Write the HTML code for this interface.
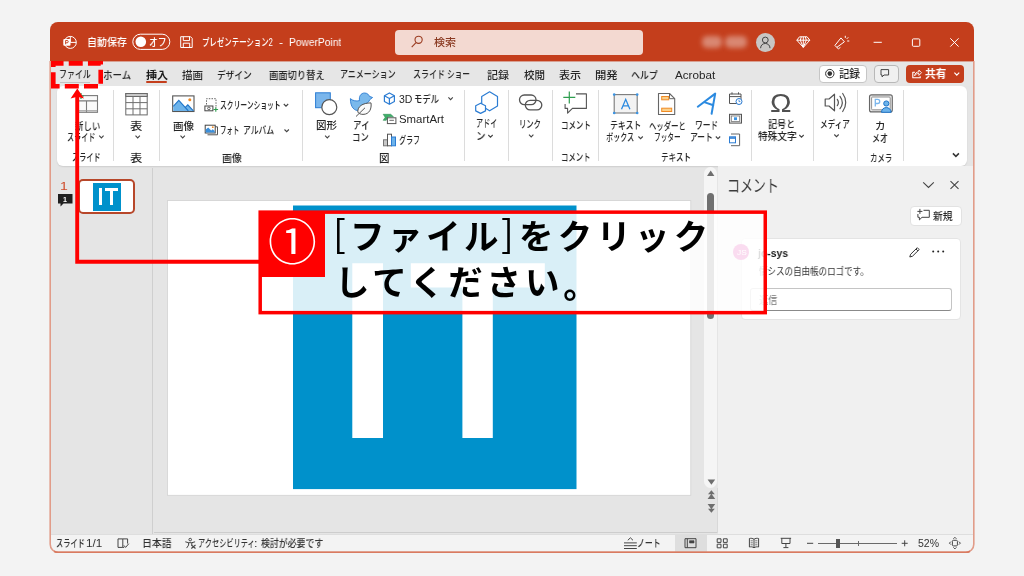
<!DOCTYPE html>
<html lang="ja">
<head>
<meta charset="utf-8">
<title>PowerPoint</title>
<style>
*{box-sizing:border-box;margin:0;padding:0}
html,body{width:1024px;height:576px;overflow:hidden;background:#f3f3f3}
body{position:relative;font-family:"Liberation Sans","Noto Sans CJK JP",sans-serif;font-size:11px;color:#262626}
.a{position:absolute}
.t{position:absolute;white-space:nowrap;line-height:1;transform-origin:0 0;left:0;top:0;will-change:transform}
#win{position:absolute;left:50px;top:22px;width:924px;height:530px;background:#e5e5e5;border-radius:8px;overflow:hidden}
#winb{position:absolute;left:50px;top:22px;width:924px;height:530px;border-radius:8px;border:1px solid #dc8a70;border-top-color:transparent;pointer-events:none}
#title{left:0;top:0;width:924px;height:39px;background:#c43e1c}
#tabs{left:0;top:39px;width:924px;height:25px;background:#e6e6e6}
#ribbon{left:6.5px;top:64px;width:910.5px;height:80px;background:#fff;border-radius:6px;box-shadow:0 1px 1.5px rgba(0,0,0,.10)}
.sep{position:absolute;width:1px;top:68px;height:71px;background:#dcdcdc}
svg{position:absolute;overflow:visible}
.cl{will-change:transform;font-size:34.5px;font-weight:700;color:#000;letter-spacing:3.5px;font-family:"Noto Sans CJK JP",sans-serif}
</style>
</head>
<body>
<div id="win">
  <div class="a" id="title"></div>
  <div class="a" id="tabs"></div>
  <div class="a" style="left:0;top:39px;width:924px;height:1px;background:#d8a092"></div>
  <div class="a" id="ribbon"></div>
  <!-- search box -->
  <div class="a" style="left:345px;top:8px;width:248px;height:25px;background:#f3d9d1;border-radius:4px"></div>
  <!-- user name blur -->
  <div class="a" style="left:652px;top:14px;width:20px;height:12px;background:#e0a08f;border-radius:5px;filter:blur(2.500px);opacity:.75"></div><div class="a" style="left:675px;top:14px;width:22px;height:12px;background:#e0a08f;border-radius:5px;filter:blur(2.500px);opacity:.75"></div>
  <!-- avatar -->
  <div class="a" style="left:705.5px;top:10.5px;width:19px;height:19px;border-radius:50%;background:#c8c6c4"></div>
  <!-- tab buttons right -->
  <div class="a" style="left:769px;top:42.5px;width:48px;height:18.5px;background:#fff;border:1px solid #c6c6c6;border-radius:4px"></div>
  <div class="a" style="left:824px;top:42.5px;width:25px;height:18.5px;background:#f0f0f0;border:1px solid #b8b8b8;border-radius:4px"></div>
  <div class="a" style="left:855.5px;top:42.5px;width:58.5px;height:18.5px;background:#c43e1c;border-radius:4px"></div>
  <!-- selected tab underline -->
  <div class="a" style="left:96px;top:59px;width:21px;height:2px;background:#c43e1c;border-radius:1px"></div>
  <div class="a" style="left:10px;top:60px;width:30px;height:1px;background:#c2c2c2"></div>
  <div class="sep" style="left:63.0px"></div><div class="sep" style="left:109.0px"></div><div class="sep" style="left:252.2px"></div><div class="sep" style="left:414.0px"></div><div class="sep" style="left:457.8px"></div><div class="sep" style="left:502.2px"></div><div class="sep" style="left:547.9px"></div><div class="sep" style="left:700.5px"></div><div class="sep" style="left:763.0px"></div><div class="sep" style="left:807.0px"></div><div class="sep" style="left:852.8px"></div>
  <!-- work area -->
  <div class="a" style="left:102px;top:146px;width:1px;height:366px;background:#cfcfcf"></div>
  <div class="a" style="left:104px;top:510px;width:564px;height:1px;background:#cdcdcd"></div>
  <!-- thumbnail -->
  <div class="a" style="left:28.400px;top:157px;width:56.700px;height:35px;background:#fff;border:2px solid #b7472a;border-radius:5px"></div>
  <div class="a" style="left:43px;top:160.750px;width:27.900px;height:28.150px;background:#0091cb"></div>
  <div class="a" style="left:48.700px;top:166.400px;width:3.300px;height:16.900px;background:#fff"></div>
  <div class="a" style="left:54.900px;top:166.400px;width:13.100px;height:2.700px;background:#fff"></div>
  <div class="a" style="left:59.900px;top:166.400px;width:3.300px;height:16.900px;background:#fff"></div>
  <!-- thumbnail comment marker -->
  <svg style="left:7.700px;top:172.400px" width="15" height="13" viewBox="0 0 15 13"><path d="M0 0h14.5v9.5H5.5L2.5 12.5V9.5H0z" fill="#1f1f1f"/></svg>
  <!-- slide -->
  <svg style="left:-50px;top:-22px" width="1024" height="576" viewBox="0 0 1024 576">
    <rect x="167.400" y="200.600" width="523.400" height="294.700" fill="#fff" stroke="#d2d2d2" stroke-width=".8"/>
    <rect x="293" y="205.500" width="283.500" height="283.600" fill="#0091cb"/>
    <path d="M352.300 263.200h30.700v174.900h-30.700zM410.800 263.200h134v24.400h-52v150.500h-30.400v-150.500h-51.600z" fill="#fff"/>
  </svg>
  <!-- v scrollbar -->
  <div class="a" style="left:654.300px;top:144.500px;width:13px;height:321.700px;background:#f5f5f5;border-radius:6.500px"></div>
  <div class="a" style="left:657px;top:170.800px;width:7.200px;height:126px;background:#707070;border-radius:3.600px"></div>
  <svg style="left:656px;top:147.500px" width="10" height="8" viewBox="0 0 10 8"><path d="M4.700 0.500L8.400 6.100H1z" fill="#6e6e6e"/></svg>
  <svg style="left:656.500px;top:456px" width="9" height="52" viewBox="0 0 9 52"><path d="M0.600 1.500h7.600L4.400 6.800z M4.400 12.300L7.800 16.300H1z M4.400 15.800L8.200 21H0.600z M0.600 26h7.600L4.400 31.200z M1 30.700H7.800L4.400 34.800z" fill="#6e6e6e"/></svg>
  <div class="a" style="left:667px;top:466px;width:1px;height:45px;background:#d8d8d8"></div>
  <!-- comment pane -->
  <div class="a" style="left:668px;top:144px;width:256px;height:368px;background:#f0f0f0"></div>
  <div class="a" style="left:860px;top:184px;width:52px;height:19.5px;background:#fff;border:1px solid #e2e2e2;border-radius:4px"></div>
  <div class="a" style="left:690.5px;top:215.5px;width:220px;height:82.5px;background:#fff;border:1px solid #e4e4e4;border-radius:4px"></div>
  <div class="a" style="left:683px;top:222px;width:16px;height:16px;border-radius:50%;background:#dd1a9a"></div>
  <div class="a" style="left:700px;top:266px;width:201.5px;height:22.5px;background:#fff;border:1px solid #c4c4c4;border-bottom-color:#8a8a8a;border-radius:3px"></div>
  <!-- status bar -->
  <div class="a" style="left:0;top:512px;width:924px;height:18px;background:#f3f3f3;border-top:1px solid #dedede"></div>
  <div class="a" style="left:624.500px;top:513px;width:32px;height:17px;background:#dedede"></div>
  <div class="a" style="left:767.800px;top:520.800px;width:79.400px;height:1px;background:#6a6a6a"></div>
  <div class="a" style="left:786px;top:517px;width:4px;height:9px;background:#555"></div>
  <div class="a" style="left:807.500px;top:519px;width:1px;height:5px;background:#6a6a6a"></div>
</div>
<div id="ui" class="a" style="left:0;top:0;width:1024px;height:576px">
<svg style="left:0;top:0" width="1024" height="576" viewBox="0 0 1024 576" fill="none">
<!-- title bar -->
<g stroke="#fff" stroke-width="1" fill="none">
  <circle cx="70.300" cy="42.400" r="6"/>
  <path d="M70.300 36.400v6h6"/>
  <rect x="63.300" y="39" width="7.200" height="6.800" rx="1" fill="#fff" stroke="none"/>
  <rect x="132.8" y="34.2" width="37" height="15.2" rx="7.6"/>
  <circle cx="140.8" cy="41.8" r="5.3" fill="#fff" stroke="none"/>
  <path d="M180.7 36.7h9.8l1.7 1.7v9.1h-11.5z"/>
  <path d="M183.3 36.7v3.9h6.2v-3.9M183.3 47.5v-4.3h6.4v4.3"/>
</g>
<path d="M65.600 44.300v-3.800h1.500a1.100 1.100 0 0 1 0 2.300h-1.500" stroke="#c43e1c" stroke-width=".9" fill="none"/>
<!-- search icon -->
<g stroke="#9a3b20" stroke-width="1.1" fill="none"><circle cx="418.6" cy="39.8" r="3.6"/><path d="M416 42.6l-4.3 4.5"/></g>
<!-- avatar person -->
<g stroke="#444" stroke-width="1" fill="none"><circle cx="765.3" cy="40" r="2.9"/><path d="M760.6 48.2c0-6.3 9.4-6.3 9.4 0"/></g>
<!-- diamond -->
<g stroke="#fff" stroke-width="1" fill="none" stroke-linejoin="round"><path d="M799.5 36.8h7.6l2.7 3.4-6.5 7.2-6.5-7.2z"/><path d="M796.8 40.2h13M801.3 36.8l-1 3.4 3 7.2 3-7.2-1-3.4M803.3 36.8v10"/></g>
<!-- pen / coming soon -->
<g stroke="#fff" stroke-width="1" fill="none" stroke-linejoin="round" stroke-linecap="round"><path d="M841.2 38.2l3.2 3.6-7.6 5.6-1.6-1.7z"/><path d="M836.8 47.4l1.6 1.4 1.7-1.2"/><path d="M845.3 36.2v1.3M847 38.6l1-1M847.6 41h1.3"/></g>
<!-- window controls -->
<g stroke="#fff" stroke-width="1" fill="none"><path d="M873.6 42.3h8.2"/><rect x="912.4" y="38.9" width="7.4" height="7.4" rx="1"/><path d="M950.3 38.3l8.3 8.3M958.6 38.3l-8.3 8.3"/></g>
<!-- tab-row buttons -->
<g fill="none" stroke="#333" stroke-width="1"><circle cx="829.8" cy="73.6" r="4.2"/><circle cx="829.8" cy="73.6" r="2.3" fill="#333" stroke="none"/></g>
<path d="M881 69.6h7.6v5.4h-4.6l-1.9 1.9v-1.9h-1.1z" stroke="#444" stroke-width="1" fill="none" stroke-linejoin="round"/>
<g stroke="#fff" stroke-width="1.1" fill="none" stroke-linejoin="round"><path d="M915 72.2h-2.2v5.6h7.4v-1.6"/><path d="M914.6 75.8c.3-2.6 2-3.9 4.3-3.9v-1.9l2.6 2.7-2.6 2.7v-1.9c-1.9 0-3.200 .6-4.300 2.300z" stroke-width=".9"/></g>
<path d="M954.4 72.7l2.4 2.4 2.4-2.4" stroke="#fff" stroke-width="1.2" fill="none"/>
<!-- chevrons -->
<g stroke="#444" stroke-width="1.1" fill="none">
<path d="M99.200 135.700l2.200 2.200 2.200-2.200"/>
<path d="M135.500 135.700l2.200 2.200 2.200-2.200"/>
<path d="M180.500 135.700l2.200 2.200 2.200-2.200"/>
<path d="M283.800 104.000l2.200 2.200 2.200-2.200"/>
<path d="M284.500 129.500l2.200 2.200 2.200-2.200"/>
<path d="M325.100 135.700l2.200 2.200 2.200-2.200"/>
<path d="M448.400 97.400l2.200 2.200 2.200-2.200"/>
<path d="M488.300 135.000l2.200 2.200 2.200-2.200"/>
<path d="M529.000 134.700l2.200 2.200 2.200-2.200"/>
<path d="M638.400 136.500l2.200 2.200 2.200-2.200"/>
<path d="M715.800 136.500l2.200 2.200 2.200-2.200"/>
<path d="M799.300 135.000l2.200 2.200 2.200-2.200"/>
<path d="M834.300 134.500l2.200 2.200 2.200-2.200"/>
</g>
<path d="M952.900 153.400l3 3 3-3" stroke="#333" stroke-width="1.5" fill="none"/>
<!-- new slide -->
<g stroke="#7a7a7a" stroke-width="1.1" fill="none"><rect x="78.500" y="95.600" width="19" height="16.700" fill="#fafafa"/><path d="M78.500 100.900h19M86.500 100.900v11.400"/><path d="M78.500 110.800h19" stroke="#9a9a9a"/></g>
<path d="M81 93v6M78 96h6" stroke="#2e9e4f" stroke-width="1.2"/>
<!-- table -->
<g stroke="#6a6a6a" stroke-width="1" fill="none"><rect x="125.800" y="93.500" width="21.400" height="21.400" fill="#fff"/><rect x="125.800" y="93.500" width="21.400" height="3" fill="#c8c8c8"/><path d="M125.800 102.600h21.400M125.800 108.800h21.400M133 96.500v18.400M140 96.500v18.400" stroke="#6f6f6f"/></g>
<!-- picture -->
<g><rect x="172.700" y="95.900" width="21.300" height="15.600" fill="#fff" stroke="#555" stroke-width="1.1"/><path d="M173.300 110.900v-4.500l5.500-6 6.500 7 2.500-2.600 5.600 6.100z" fill="#6db3ea"/><path d="M173.300 106.400l5.500-6 9.500 10.500M185.300 107.400l2.500-2.600 5.600 6.100" stroke="#1e74c8" stroke-width="1.1" fill="none"/><circle cx="189.800" cy="99.700" r="1.500" fill="#f08a24"/></g>
<!-- screenshot -->
<g fill="none"><path d="M206.500 104.500v-5.800h9.500v9.500" stroke="#666" stroke-width="1" stroke-dasharray="1.500 1.200"/><rect x="204.900" y="106" width="8" height="4.800" stroke="#444" stroke-width="1" fill="#fff"/><circle cx="208.900" cy="108.400" r="1.300" stroke="#444" stroke-width=".8"/><path d="M215.800 107.200v4.600M213.500 109.500h4.600" stroke="#2e9e4f" stroke-width="1.100"/></g>
<!-- photo album -->
<g fill="none"><path d="M208 126.800h9.500v8h-10" stroke="#555" stroke-width="1"/><rect x="205.200" y="125.200" width="10" height="7.800" fill="#fff" stroke="#444" stroke-width="1"/><path d="M205.700 132.500v-3l2.500-2 3 3 1.500-1.200 2 1.700v1.500z" fill="#3b8fdb"/><circle cx="212.800" cy="127.200" r=".9" fill="#f08a24"/></g>
<!-- shapes -->
<g><rect x="315.600" y="92.800" width="14.700" height="14.900" fill="#7ab6ec" stroke="#2b7cd3" stroke-width="1"/><circle cx="329.300" cy="107.200" r="7.500" fill="#fff" stroke="#555" stroke-width="1.200"/></g>
<!-- icons (duck + leaf) -->
<g><path d="M350.400 98.600C352.500 100.800 356.500 101.500 359.600 100.600C358.600 96.500 361 93 364.500 93C367.500 93 369 95 369.300 96.300L372.600 97.500L369.600 99.800C369.200 101.500 368 102.700 366.500 103.200L360 110.300C354 111.800 350.300 106.500 350.400 98.600z" fill="#7ab9ec" stroke="#2b7cd3" stroke-width=".9" stroke-linejoin="round"/><path d="M371 102.900C371.800 108.500 369.500 114.400 363 114.400C360.500 114.400 358.500 113.400 357.800 112C357.500 106.500 362.500 102.900 371 102.900z" fill="#fafafa" stroke="#555" stroke-width="1"/><path d="M356 116.500L365 107.800" stroke="#555" stroke-width="1"/></g>
<!-- 3D model -->
<g stroke="#2b7cd3" stroke-width="1.200" fill="none" stroke-linejoin="round"><path d="M389.400 92.900l5 2.800v5.700l-5 2.800-5-2.800v-5.700z"/><path d="M384.400 95.700l5 2.800 5-2.800M389.400 98.500v5.700"/></g>
<!-- smartart -->
<g><path d="M383.200 114.300h7.500l2.800 2.500h-5.300l-2 3.500h-3l2-3z" fill="#3fae6a" stroke="#2e8f52" stroke-width=".6"/><rect x="387.400" y="117.800" width="8.500" height="5.800" fill="#fff" stroke="#555" stroke-width="1"/><path d="M389.400 120.300h4.500" stroke="#555" stroke-width=".9"/></g>
<!-- chart -->
<g stroke-width="1"><rect x="383.500" y="139.800" width="4" height="6" fill="#c8c8c8" stroke="#777"/><rect x="387.500" y="134.200" width="4" height="11.600" fill="#fff" stroke="#555"/><rect x="391.500" y="137" width="4" height="8.800" fill="#6db3ea" stroke="#2b7cd3"/></g>
<!-- add-ins -->
<g stroke="#2b7cd3" stroke-width="1.200" fill="#fff" stroke-linejoin="round"><path d="M489.600 91.800l7.900 4.700v9.600l-7.900 4.700-7.900-4.700v-9.600z"/><path d="M480.600 103.200l4.900 2.500v5.200l-4.900 2.500-4.900-2.500v-5.200z"/></g>
<!-- link -->
<g stroke="#555" stroke-width="1.300" fill="none"><rect x="519.500" y="95" width="16.500" height="9.600" rx="4.800"/><rect x="525.300" y="100.300" width="16.500" height="9.600" rx="4.800"/></g>
<!-- comment -->
<g fill="none"><path d="M576 93.900h10.400v14.500h-14l-4.800 4.800v-4.800h-2.500v-4.500" stroke="#555" stroke-width="1.100" stroke-linejoin="round"/><path d="M569.300 91.400v12M563.300 97.400h12" stroke="#2e9e4f" stroke-width="1.200"/></g>
<!-- text box -->
<g><rect x="614.200" y="94.600" width="23" height="18.400" fill="#f3f3f3" stroke="#7a7a7a" stroke-width="1.100"/><g fill="#3b94e3"><circle cx="614.200" cy="94.600" r="1.300"/><circle cx="637.200" cy="94.600" r="1.300"/><circle cx="614.200" cy="113" r="1.300"/><circle cx="637.200" cy="113" r="1.300"/></g><path d="M621.500 109.200l4.200-9.900 4.200 9.900M623 105.800h5.400" stroke="#2b8ae0" stroke-width="1.300" fill="none"/></g>
<!-- header footer -->
<g><path d="M658.500 93.500h11l5.200 5.200v15.800h-16.200z" fill="#fff" stroke="#666" stroke-width="1.100" stroke-linejoin="round"/><path d="M669.500 93.500v5.200h5.200" fill="none" stroke="#666" stroke-width="1"/><rect x="661.700" y="96.500" width="7" height="3.300" fill="#fbd08a" stroke="#f08a24" stroke-width="1"/><rect x="661.700" y="108.200" width="10" height="3.300" fill="#fbd08a" stroke="#f08a24" stroke-width="1"/></g>
<!-- wordart -->
<path d="M697.800 106.700L715.200 93.600L711.600 113.700M705 102.400L713.300 105.200" stroke="#2b8ae0" stroke-width="2" fill="none" stroke-linecap="round" stroke-linejoin="round"/>
<!-- date/time, slide number, object -->
<g fill="none" stroke-width="1"><path d="M729.500 94h11.500v9.500h-11.500z" stroke="#555"/><path d="M729.500 96.600h11.500M732 92.300v2M738.500 92.300v2" stroke="#555"/><circle cx="739" cy="101.500" r="3" fill="#fff" stroke="#2b7cd3"/><path d="M739 99.800v1.800h1.400" stroke="#2b7cd3" stroke-width=".8"/>
<rect x="729.500" y="114.300" width="12" height="8.800" stroke="#555" fill="#e9e9e9"/><rect x="731.300" y="116" width="8.400" height="5.400" stroke="#777" fill="#fff" stroke-width=".8"/><rect x="734" y="117.300" width="3" height="2.800" fill="#3b94e3" stroke="none"/>
<path d="M731 134h8.600v11.700h-8.600" stroke="#666"/><rect x="729.500" y="136.800" width="6" height="6" fill="#fff" stroke="#2b7cd3"/><path d="M729.500 138h6" stroke="#2b7cd3" stroke-width="1.600"/></g>
<!-- media -->
<g fill="none" stroke="#555" stroke-width="1.200" stroke-linejoin="round"><path d="M825.200 99v7h3.800l5.500 4.800v-16.600l-5.500 4.800z"/><path d="M837.300 99.300c1.300 1.900 1.300 4.500 0 6.400M840 96.300c2.800 3.800 2.800 8.600 0 12.400M842.700 93.500c4 5.400 4 12.600 0 18" stroke-linecap="round"/></g>
<!-- cameo -->
<g><rect x="869.500" y="94.900" width="22.800" height="17" rx="2" fill="#e6e6e6" stroke="#666" stroke-width="1.100"/><rect x="871.600" y="97" width="18.600" height="12.800" rx="1" fill="#fff" stroke="#888" stroke-width=".9"/><path d="M875.300 106.500v-7.200h2.300a2 2 0 0 1 0 4.200h-2.300" stroke="#7ab6ec" stroke-width="1.300" fill="none"/><circle cx="886.300" cy="103.500" r="2.600" fill="#6db3ea" stroke="#1e74c8" stroke-width="1"/><path d="M881.500 112.300c0-6.300 9.600-6.300 9.600 0z" fill="#6db3ea" stroke="#1e74c8" stroke-width="1"/></g>
<!-- omega as path-free: drawn via text below -->
<!-- comment pane icons -->
<g stroke="#444" stroke-width="1.1" fill="none"><path d="M923.200 182.300l5.300 5.200 5.300-5.200"/><path d="M950.500 181.200l8 7.700M958.500 181.200l-8 7.700"/></g>
<g stroke="#444" stroke-width="1" fill="none" stroke-linejoin="round"><path d="M923.500 210.300h5.800v7h-7.300l-2.600 2.600v-2.600h-1.500v-3.300"/><path d="M919.900 208.900v5M917.400 211.400h5" stroke-width="1"/></g>
<g stroke="#333" stroke-width="1" fill="none" stroke-linejoin="round"><path d="M917.300 247.700l1.900 1.900-6.700 6.600-2.700.8.800-2.700z"/><path d="M916 249l1.900 1.900"/></g>
<g fill="#222"><circle cx="933.200" cy="251.600" r="1"/><circle cx="938.200" cy="251.600" r="1"/><circle cx="943.200" cy="251.600" r="1"/></g>
<!-- status bar icons -->
<g stroke="#444" stroke-width="1" fill="none" stroke-linejoin="round">
<path d="M118 538.900h4.800v8.500h-4.800zM122.800 538.900h4.800v4.700M122.800 547.400h1.400"/><path d="M123.900 545.400l1.700 2 3.200-3.700"/>
<circle cx="190.200" cy="539.600" r="1.300"/><path d="M185.300 541.800l3.300.9h3.200l3.300-.9M188.600 542.700v2.400l-2 3M191.800 542.700v2.400"/><path d="M191.300 545l4.200 3.500M195.500 545l-4.200 3.500" stroke-width="1.100"/>
<path d="M624 548.500h12.800M624 545.700h12.800M624 542.900h12.800M627.800 540.300l2.600-2.500 2.600 2.500"/>
<rect x="685" y="538.700" width="11" height="9"/><path d="M687.300 538.700v9"/><rect x="689.500" y="540.700" width="4.500" height="2.300" fill="#444" stroke-width=".6"/>
<rect x="717.200" y="538.800" width="3.800" height="3.600"/><rect x="723.400" y="538.800" width="3.800" height="3.600"/><rect x="717.200" y="544.200" width="3.800" height="3.600"/><rect x="723.400" y="544.200" width="3.800" height="3.600"/>
<path d="M754 539.300c-1.300-1-3-1.200-4.600-.8v8.500c1.600-.4 3.300-.2 4.600.8 1.300-1 3-1.200 4.600-.8v-8.500c-1.600-.4-3.300-.2-4.600.8zM754 539.300v8.500"/><path d="M750.600 540.800h2.200M750.600 542.800h2.200M750.600 544.800h2.200M755.200 540.800h2.200M755.200 542.800h2.200M755.200 544.800h2.200" stroke-width=".7"/>
<path d="M780.700 538.300h10.400M781.800 538.300v5.200h8.200v-5.200M785.900 543.500v3.700M783.400 547.600h5"/>
<path d="M807 543.300h6.200M901.700 543.300h6M904.700 540.300v6"/>
<rect x="952.400" y="540.300" width="5" height="5.600" rx="1"/><path d="M953.400 538.800l1.500-1.500 1.500 1.500M953.400 547.400l1.500 1.500 1.500-1.500M950.900 541.600l-1.500 1.500 1.500 1.500M958.900 541.600l1.500 1.500-1.500 1.500"/>
</g>

</svg>
<span class="t" style="left:87.10px;top:37.00px;font-size:10.5px;color:#ffffff;font-weight:500;transform:scaleX(0.950);">自動保存</span>
<span class="t" style="left:149.17px;top:37.00px;font-size:10.5px;color:#ffffff;font-weight:500;transform:scaleX(0.833);">オフ</span>
<span class="t" style="left:201.79px;top:37.00px;font-size:10.5px;color:#ffffff;font-weight:500;transform:scaleX(0.707);">プレゼンテーション2</span>
<span class="t" style="left:278.50px;top:36.86px;font-size:10.5px;color:#ffffff;font-weight:400;transform:scaleX(1.167);">-</span>
<span class="t" style="left:289.03px;top:37.00px;font-size:10.5px;color:#ffffff;font-weight:500;transform:scaleX(0.972);">PowerPoint</span>
<span class="t" style="left:434.00px;top:37.00px;font-size:10.5px;color:#8a3a22;font-weight:500;transform:scaleX(1.050);">検索</span>
<span class="t" style="left:58.94px;top:69.00px;font-size:10.5px;font-weight:500;transform:scaleX(0.757);">ファイル</span>
<span class="t" style="left:102.90px;top:69.50px;font-size:10.5px;font-weight:500;transform:scaleX(0.903);">ホーム</span>
<span class="t" style="left:145.60px;top:69.50px;font-size:10.5px;color:#1a1a1a;font-weight:700;transform:scaleX(1.058);">挿入</span>
<span class="t" style="left:181.60px;top:69.50px;font-size:10.5px;font-weight:500;transform:scaleX(1.005);">描画</span>
<span class="t" style="left:217.18px;top:69.50px;font-size:10.5px;font-weight:500;transform:scaleX(0.825);">デザイン</span>
<span class="t" style="left:268.75px;top:69.50px;font-size:10.5px;font-weight:500;transform:scaleX(0.883);">画面切り替え</span>
<span class="t" style="left:340.24px;top:69.00px;font-size:10.5px;font-weight:500;transform:scaleX(0.761);">アニメーション</span>
<span class="t" style="left:412.74px;top:69.00px;font-size:10.5px;font-weight:500;transform:scaleX(0.762);">スライド</span>
<span class="t" style="left:447.27px;top:69.00px;font-size:10.5px;font-weight:500;transform:scaleX(0.725);">ショー</span>
<span class="t" style="left:486.95px;top:69.50px;font-size:10.5px;font-weight:500;transform:scaleX(1.050);">記録</span>
<span class="t" style="left:524.00px;top:69.50px;font-size:10.5px;font-weight:500;">校閲</span>
<span class="t" style="left:558.95px;top:69.50px;font-size:10.5px;font-weight:500;transform:scaleX(1.053);">表示</span>
<span class="t" style="left:595.42px;top:69.50px;font-size:10.5px;font-weight:500;transform:scaleX(1.079);">開発</span>
<span class="t" style="left:631.15px;top:69.50px;font-size:10.5px;font-weight:500;transform:scaleX(0.850);">ヘルプ</span>
<span class="t" style="left:675.00px;top:69.50px;font-size:10.5px;font-weight:500;transform:scaleX(1.111);">Acrobat</span>
<span class="t" style="left:838.80px;top:69.30px;font-size:11px;color:#1a1a1a;font-weight:500;transform:scaleX(0.936);">記録</span>
<span class="t" style="left:925.00px;top:69.30px;font-size:11px;color:#ffffff;font-weight:700;transform:scaleX(0.971);">共有</span>
<span class="t" style="left:74.50px;top:120.50px;font-size:10.5px;font-weight:500;transform:scaleX(0.806);">新しい</span>
<span class="t" style="left:67.33px;top:132.00px;font-size:10.5px;font-weight:500;transform:scaleX(0.675);">スライド</span>
<span class="t" style="left:72.32px;top:152.00px;font-size:10.5px;font-weight:500;transform:scaleX(0.682);">スライド</span>
<span class="t" style="left:130.33px;top:120.50px;font-size:10.5px;font-weight:500;transform:scaleX(1.167);">表</span>
<span class="t" style="left:130.33px;top:152.50px;font-size:10.5px;font-weight:500;transform:scaleX(1.167);">表</span>
<span class="t" style="left:173.00px;top:120.50px;font-size:10.5px;font-weight:500;">画像</span>
<span class="t" style="left:222.00px;top:152.50px;font-size:10.5px;font-weight:500;transform:scaleX(0.938);">画像</span>
<span class="t" style="left:220.35px;top:100.00px;font-size:10.5px;font-weight:500;transform:scaleX(0.645);">スクリーンショット</span>
<span class="t" style="left:220.39px;top:125.30px;font-size:10.5px;font-weight:500;transform:scaleX(0.612);">フォト</span>
<span class="t" style="left:243.01px;top:125.30px;font-size:10.5px;font-weight:500;transform:scaleX(0.741);">アルバム</span>
<span class="t" style="left:316.21px;top:120.20px;font-size:10.5px;font-weight:500;transform:scaleX(0.989);">図形</span>
<span class="t" style="left:353.19px;top:120.00px;font-size:10.5px;font-weight:500;transform:scaleX(0.806);">アイ</span>
<span class="t" style="left:352.39px;top:132.00px;font-size:10.5px;font-weight:500;transform:scaleX(0.806);">コン</span>
<span class="t" style="left:398.61px;top:93.75px;font-size:10.5px;font-weight:500;transform:scaleX(0.992);">3D</span>
<span class="t" style="left:414.21px;top:93.75px;font-size:10.5px;font-weight:500;transform:scaleX(0.792);">モデル</span>
<span class="t" style="left:398.52px;top:114.40px;font-size:10.5px;font-weight:500;transform:scaleX(1.085);">SmartArt</span>
<span class="t" style="left:398.93px;top:135.40px;font-size:10.5px;font-weight:500;transform:scaleX(0.669);">グラフ</span>
<span class="t" style="left:379.00px;top:152.50px;font-size:10.5px;font-weight:500;">図</span>
<span class="t" style="left:476.03px;top:118.20px;font-size:10.5px;font-weight:500;transform:scaleX(0.674);">アドイ</span>
<span class="t" style="left:475.68px;top:131.00px;font-size:10.5px;font-weight:500;transform:scaleX(0.913);">ン</span>
<span class="t" style="left:518.91px;top:118.50px;font-size:10.5px;font-weight:500;transform:scaleX(0.696);">リンク</span>
<span class="t" style="left:560.58px;top:120.00px;font-size:10.5px;font-weight:500;transform:scaleX(0.711);">コメント</span>
<span class="t" style="left:560.59px;top:152.00px;font-size:10.5px;font-weight:500;transform:scaleX(0.704);">コメント</span>
<span class="t" style="left:610.00px;top:120.00px;font-size:10.5px;font-weight:500;transform:scaleX(0.750);">テキスト</span>
<span class="t" style="left:606.33px;top:132.00px;font-size:10.5px;font-weight:500;transform:scaleX(0.675);">ボックス</span>
<span class="t" style="left:648.80px;top:120.50px;font-size:10.5px;font-weight:500;transform:scaleX(0.700);">ヘッダーと</span>
<span class="t" style="left:653.86px;top:132.00px;font-size:10.5px;font-weight:500;transform:scaleX(0.637);">フッター</span>
<span class="t" style="left:695.02px;top:120.00px;font-size:10.5px;font-weight:500;transform:scaleX(0.733);">ワード</span>
<span class="t" style="left:690.01px;top:132.00px;font-size:10.5px;font-weight:500;transform:scaleX(0.741);">アート</span>
<span class="t" style="left:660.53px;top:152.00px;font-size:10.5px;font-weight:500;transform:scaleX(0.718);">テキスト</span>
<span class="t" style="left:768.14px;top:119.30px;font-size:10.5px;font-weight:500;transform:scaleX(0.862);">記号と</span>
<span class="t" style="left:757.75px;top:131.00px;font-size:10.5px;font-weight:500;transform:scaleX(0.921);">特殊文字</span>
<span class="t" style="left:770.15px;top:90.80px;font-size:25px;color:#505050;font-weight:400;transform:scaleX(1.153);">Ω</span>
<span class="t" style="left:820.30px;top:119.00px;font-size:10.5px;font-weight:500;transform:scaleX(0.724);">メディア</span>
<span class="t" style="left:875.34px;top:121.00px;font-size:10.5px;font-weight:500;transform:scaleX(0.963);">カ</span>
<span class="t" style="left:872.22px;top:132.50px;font-size:10.5px;font-weight:500;transform:scaleX(0.764);">メオ</span>
<span class="t" style="left:869.79px;top:153.30px;font-size:10.5px;font-weight:500;transform:scaleX(0.707);">カメラ</span>
<span class="t" style="left:59.92px;top:180.60px;font-size:11px;color:#cf4b2a;font-weight:400;transform:scaleX(1.280);font-family:"DejaVu Sans",sans-serif;">1</span>
<span class="t" style="left:63.00px;top:197.40px;font-size:6.5px;color:#ffffff;font-weight:700;transform:scaleX(1.100);">1</span>
<span class="t" style="left:726.91px;top:177.80px;font-size:17px;color:#3a3a3a;font-weight:400;transform:scaleX(0.763);">コメント</span>
<span class="t" style="left:932.50px;top:210.50px;font-size:10.5px;font-weight:500;transform:scaleX(0.929);">新規</span>
<span class="t" style="left:736.50px;top:249.80px;font-size:6.5px;color:#ffffff;font-weight:500;transform:scaleX(1.286);">JS</span>
<span class="t" style="left:757.70px;top:248.30px;font-size:11px;color:#1a1a1a;font-weight:700;transform:scaleX(0.945);">jo-sys</span>
<span class="t" style="left:758.60px;top:267.40px;font-size:10px;color:#333;font-weight:400;transform:scaleX(0.851);">情シスの自由帳のロゴです。</span>
<span class="t" style="left:758.60px;top:294.50px;font-size:10.5px;color:#777;font-weight:400;transform:scaleX(0.871);">返信</span>
<span class="t" style="left:55.56px;top:537.70px;font-size:10.5px;color:#333;font-weight:500;transform:scaleX(0.688);">スライド</span>
<span class="t" style="left:86.38px;top:538.20px;font-size:10.5px;color:#333;font-weight:500;transform:scaleX(1.115);">1/1</span>
<span class="t" style="left:141.87px;top:538.20px;font-size:10.5px;color:#333;font-weight:500;transform:scaleX(0.940);">日本語</span>
<span class="t" style="left:198.32px;top:538.20px;font-size:10.5px;color:#333;font-weight:500;transform:scaleX(0.684);">アクセシビリティ</span>
<span class="t" style="left:253.60px;top:538.06px;font-size:10.5px;color:#333;font-weight:400;transform:scaleX(1.200);">:</span>
<span class="t" style="left:261.00px;top:538.20px;font-size:10.5px;color:#333;font-weight:500;transform:scaleX(0.847);">検討が必要です</span>
<span class="t" style="left:637.25px;top:538.20px;font-size:10.5px;color:#333;font-weight:500;transform:scaleX(0.748);">ノート</span>
<span class="t" style="left:918.01px;top:538.20px;font-size:10.5px;color:#333;font-weight:500;transform:scaleX(0.990);">52%</span>
</div>
<svg style="left:0;top:0" width="1024" height="576" viewBox="0 0 1024 576" fill="none"><path d="M50.200 61V544.300a8 8 0 0 0 8 8H965.800a8 8 0 0 0 8-8V61" stroke="#e19c89" stroke-width="1.600"/><path d="M54 551.200a8 8 0 0 0 4.200 1.100H965.800a8 8 0 0 0 4.200-1.100" stroke="#d97a60" stroke-width="1.600"/></svg>
<!-- annotations -->
<div id="anno" class="a" style="left:0;top:0;width:1024px;height:576px">
  <svg style="left:0;top:0" width="1024" height="576" viewBox="0 0 1024 576">
    <path d="M53.3 86.3V63.35H100.7V86.3z" fill="none" stroke="#ff0000" stroke-width="4.6" stroke-dasharray="14 5.2"/>
    <path d="M77.200 96V261.800H259" fill="none" stroke="#ff0000" stroke-width="3.900"/>
    <path d="M77.300 88.400L84 98.400L77.300 96.800L70.600 98.400z" fill="#ff0000"/>
  </svg>
  <svg style="left:0;top:0" width="1024" height="576" viewBox="0 0 1024 576"><rect x="260.200" y="212.150" width="505.050" height="100.500" fill="rgba(255,255,255,.85)" stroke="#ff0000" stroke-width="3.500"/></svg>
  <div class="a" style="left:258.750px;top:210.500px;width:66px;height:66.200px;background:#ff0000"></div>
  <span class="t" style="left:267.600px;top:215px;font-size:48.750px;color:#fff;font-family:'Noto Sans CJK JP',sans-serif">①</span>
  <span class="t cl" style="left:333px;top:213px;font-size:38px;font-weight:400;letter-spacing:0">[</span>
  <span class="t cl" style="left:349.7px;top:217px">ファイル</span>
  <span class="t cl" style="left:501px;top:213px;font-size:38px;font-weight:400;letter-spacing:0">]</span>
  <span class="t cl" style="left:518.500px;top:217px;letter-spacing:4.200px">をクリック</span>
  <span class="t cl" style="left:334.700px;top:263px;letter-spacing:3.900px">してください<span style="position:relative;top:3px">。</span></span>
</div>
</body>
</html>
